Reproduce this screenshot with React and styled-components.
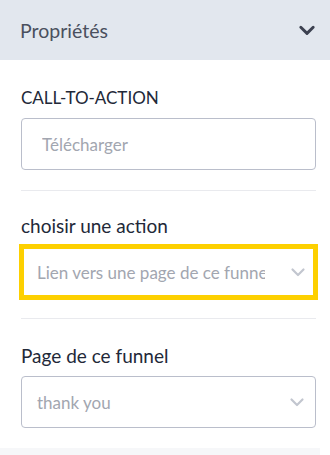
import styled, { createGlobalStyle } from "styled-components"

const GlobalStyle = createGlobalStyle`
  body {
    margin: 0;
    background: #ffffff;
    font-family: Lato, "Open Sans", sans-serif;
  }
`

const Panel = styled.div`
  width: 330px;
  height: 455px;
  overflow: hidden;
  display: flex;
  flex-direction: column;
`

const Header = styled.div`
  height: 60px;
  flex-shrink: 0;
  background: #e2e7ee;
  display: flex;
  align-items: center;
  justify-content: space-between;
  padding: 0 14px 0 20px;
  box-sizing: border-box;
  color: #4a505e;
  font-size: 19.5px;
`

const Body = styled.div`
  width: 320px;
  padding: 0 4px 0 21px;
  box-sizing: border-box;
`

const Section = styled.div`
  padding: ${(p) => p.$top}px 0 20px;
  border-bottom: ${(p) => (p.$last ? "none" : "1px solid #e9eaee")};
`

const Label = styled.div`
  font-size: ${(p) => (p.$caps ? 17 : 19)}px;
  color: #222838;
  line-height: 20px;
  margin-bottom: 10px;
`

const Field = styled.div`
  height: 52px;
  border: 1px solid #babecb;
  border-radius: 4px;
  box-sizing: border-box;
  display: flex;
  align-items: center;
  padding: 0 10px 0 ${(p) => p.$pad}px;
  font-size: 17px;
  color: #a2a6b0;
  ${(p) =>
    p.$focus &&
    `
    border: 3px solid #fdd000;
    border-radius: 0;
    outline: 2px solid #fdd000;
    padding-left: 13px;
    padding-right: 7px;
  `}
`

const Value = styled.span`
  flex: 0 0 ${(p) => p.$max || 200}px;
  white-space: nowrap;
  overflow: hidden;
`

const Arrow = styled.span`
  margin-left: auto;
  display: flex;
`

const Footer = styled.div`
  width: 320px;
  height: 8px;
  margin-top: auto;
  background: #f6f7f9;
`

const Chevron = ({ color, size, width }) => (
  <svg width={size} height={size} viewBox="0 0 16 16">
    <path
      d="M2.5 5.5 L8 11 L13.5 5.5"
      fill="none"
      stroke={color}
      strokeWidth={width}
      strokeLinecap="round"
      strokeLinejoin="round"
    />
  </svg>
)

export default function App() {
  return (
    <Panel>
      <GlobalStyle />
      <Header>
        <span>Propriétés</span>
        <Chevron color="#3c4150" size={18} width={2.6} />
      </Header>
      <Body>
        <Section $top={28}>
          <Label $caps>CALL-TO-ACTION</Label>
          <Field $pad={20}>
            <Value>Télécharger</Value>
          </Field>
        </Section>
        <Section $top={25}>
          <Label>choisir une action</Label>
          <Field $focus>
            <Value $max={228}>Lien vers une page de ce funnel</Value>
            <Arrow>
              <Chevron color="#c2c6cf" size={16} width={2.2} />
            </Arrow>
          </Field>
        </Section>
        <Section $top={27} $last>
          <Label>Page de ce funnel</Label>
          <Field $pad={15}>
            <Value>thank you</Value>
            <Arrow>
              <Chevron color="#c2c6cf" size={16} width={2.2} />
            </Arrow>
          </Field>
        </Section>
      </Body>
      <Footer />
    </Panel>
  )
}
